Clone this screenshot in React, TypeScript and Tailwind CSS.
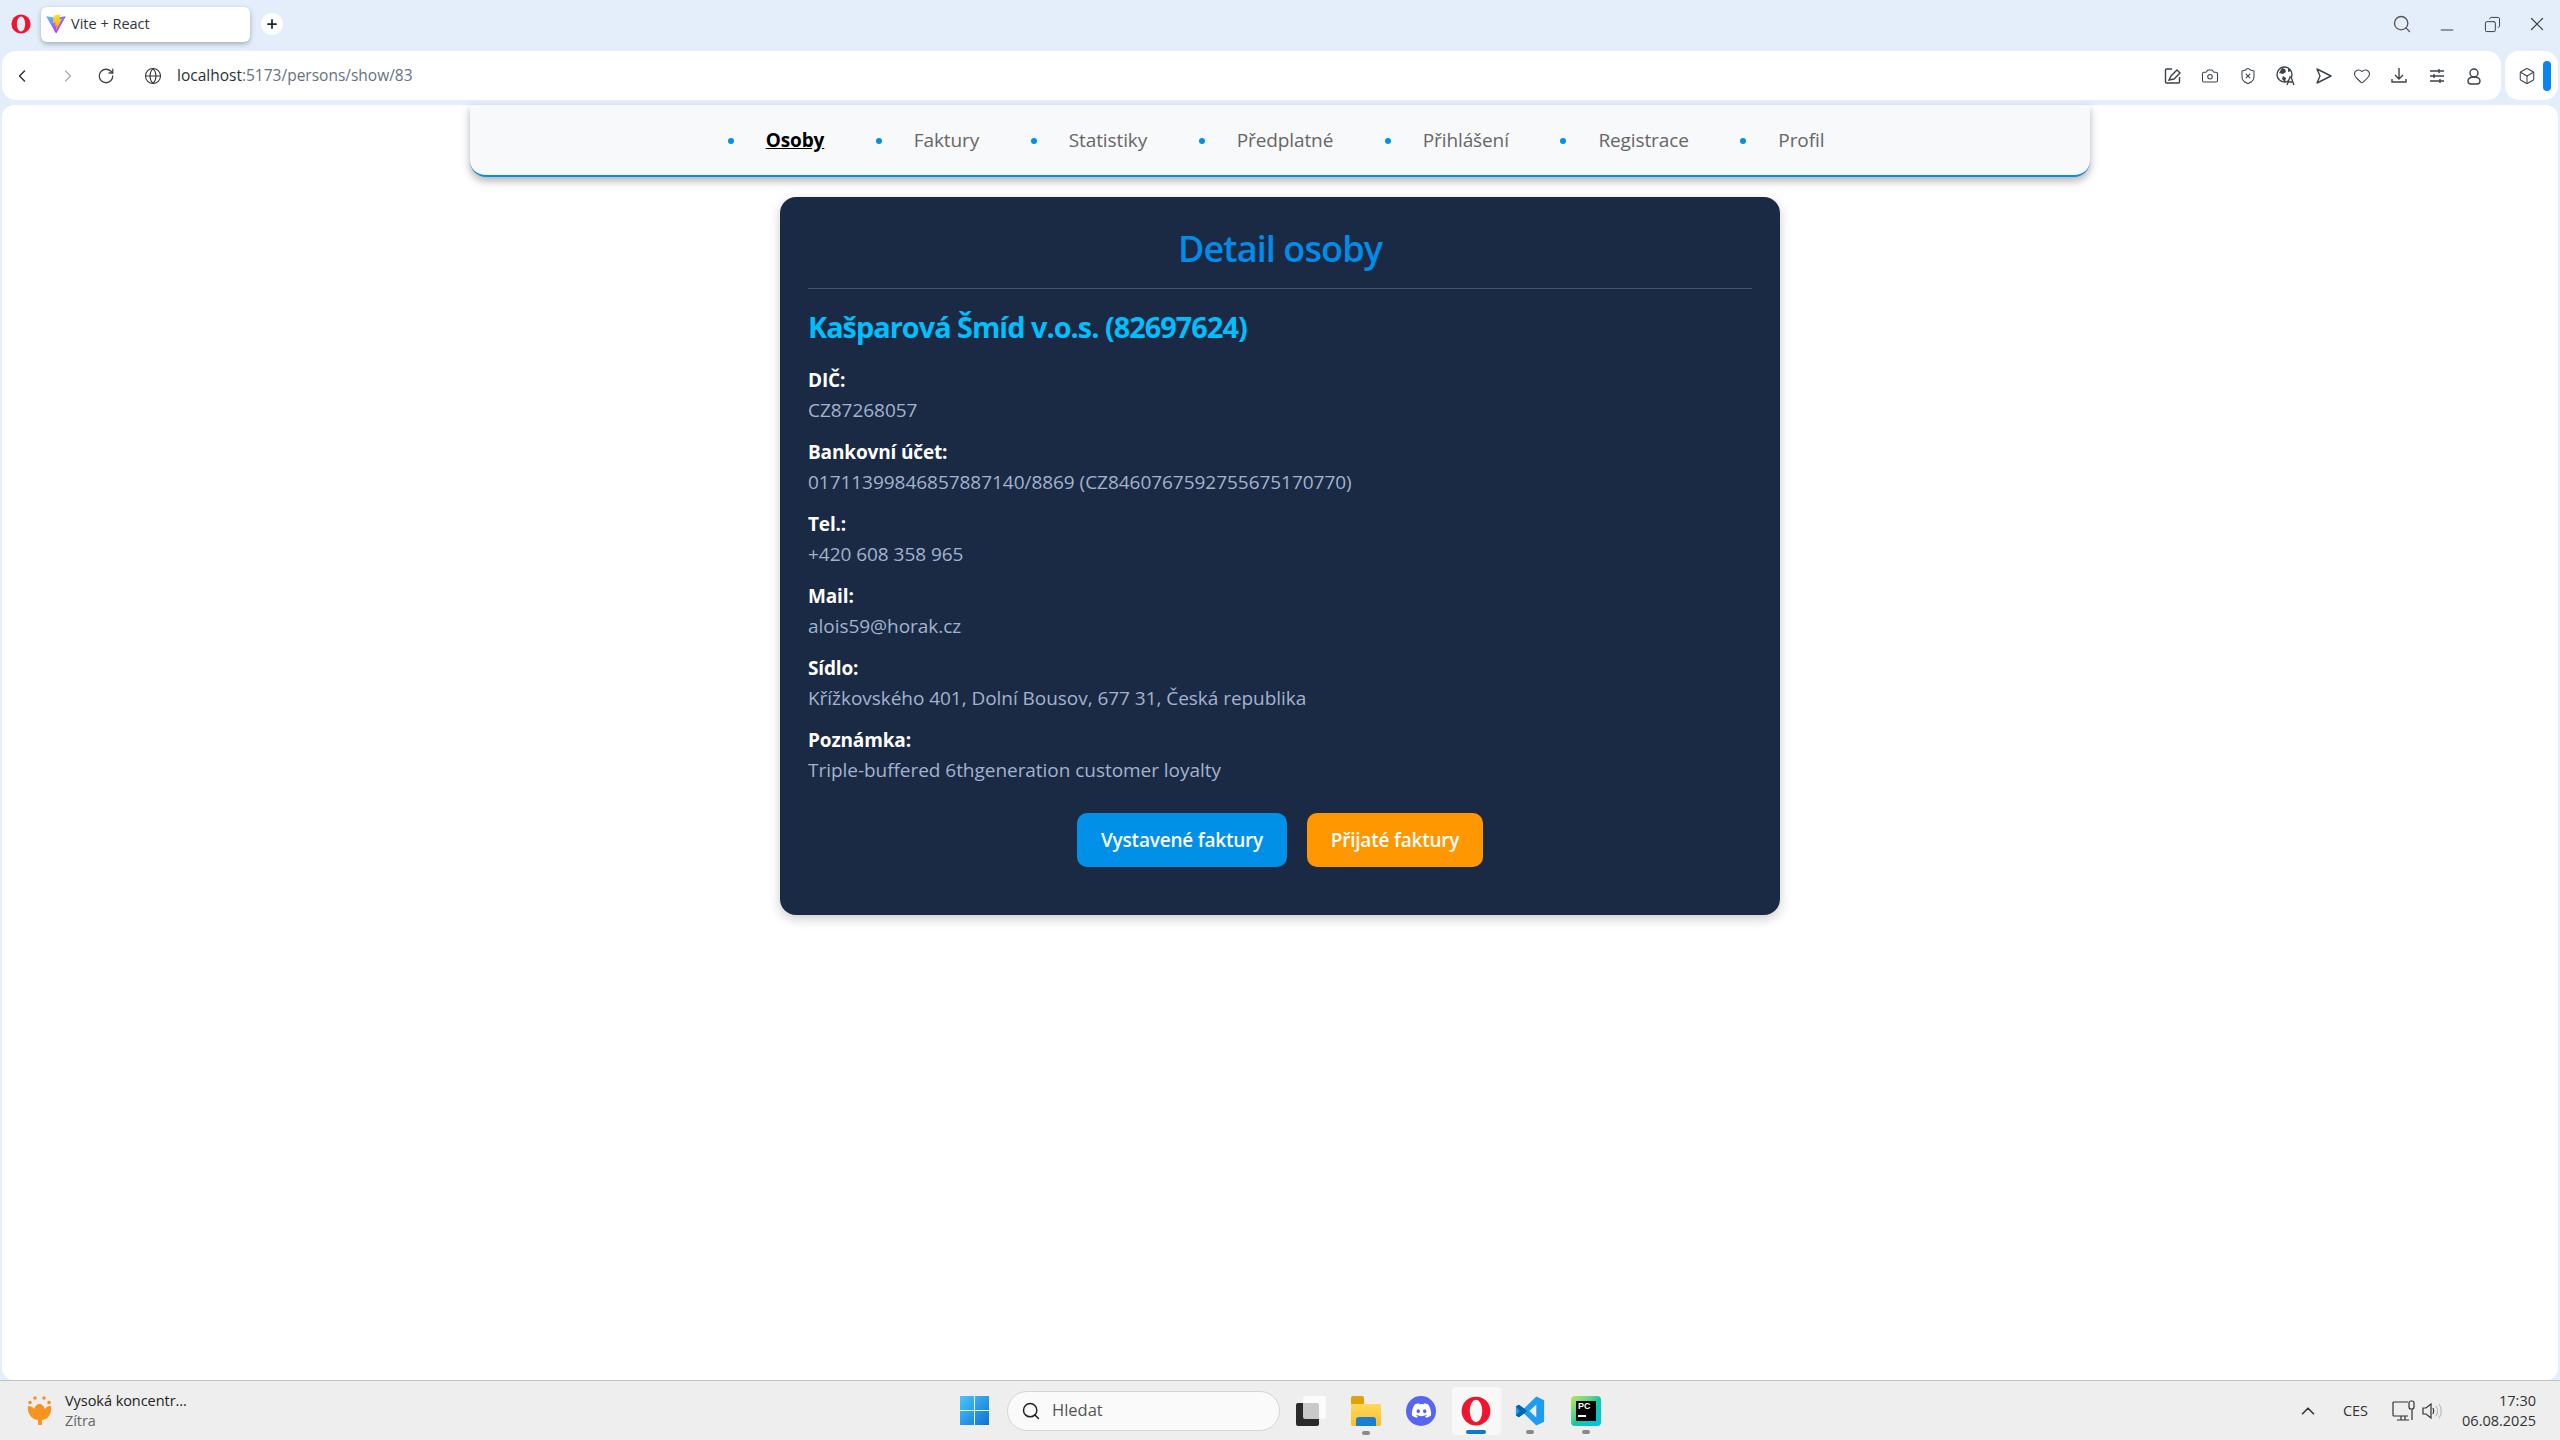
import { ChevronLeft, ChevronRight, ChevronUp, Globe, RotateCw, Search, X, Minus, Plus, Camera, ShieldX, Heart, Box, Copy } from 'lucide-react';
import { FaDiscord } from 'react-icons/fa';

const font = "font-['Open_Sans',_'Noto_Sans',sans-serif]";
const navItems = ['Osoby', 'Faktury', 'Statistiky', 'Předplatné', 'Přihlášení', 'Registrace', 'Profil'];
const details = [
  { label: 'DIČ:', value: 'CZ87268057' },
  { label: 'Bankovní účet:', value: '01711399846857887140/8869 (CZ8460767592755675170770)' },
  { label: 'Tel.:', value: '+420 608 358 965' },
  { label: 'Mail:', value: 'alois59@horak.cz' },
  { label: 'Sídlo:', value: 'Křížkovského 401, Dolní Bousov, 677 31, Česká republika' },
  { label: 'Poznámka:', value: 'Triple-buffered 6thgeneration customer loyalty' },
];

function OperaLogo({ size, hole }: { size: number; hole: string }) {
  return (
    <svg width={size} height={size} viewBox="0 0 24 24">
      <circle cx="12" cy="12" r="11.5" fill="#f0142f" />
      <ellipse cx="12" cy="12" rx="5" ry="9" fill={hole} />
    </svg>
  );
}

function ViteLogo() {
  return (
    <svg width="20" height="20" viewBox="0 0 410 404">
      <defs>
        <linearGradient id="viteA" x1="6" y1="33" x2="235" y2="344" gradientUnits="userSpaceOnUse">
          <stop stopColor="#41D1FF" />
          <stop offset="1" stopColor="#BD34FE" />
        </linearGradient>
        <linearGradient id="viteB" x1="194" y1="8" x2="236" y2="292" gradientUnits="userSpaceOnUse">
          <stop stopColor="#FFEA83" />
          <stop offset="0.08" stopColor="#FFDD35" />
          <stop offset="1" stopColor="#FFA800" />
        </linearGradient>
      </defs>
      <path fill="url(#viteA)" d="M399.641 59.5246L215.643 388.545C211.844 395.338 202.084 395.378 198.228 388.618L10.5817 59.5563C6.38087 52.1896 12.6802 43.2665 21.0281 44.7586L205.223 77.6824C206.398 77.8924 207.601 77.8904 208.776 77.6763L389.119 44.8058C397.439 43.2894 403.768 52.1434 399.641 59.5246Z" />
      <path fill="url(#viteB)" d="M292.965 1.5744L156.801 28.2552C154.563 28.6937 152.906 30.5903 152.771 32.8664L144.395 174.33C144.198 177.662 147.258 180.248 150.51 179.498L188.42 170.749C191.967 169.931 195.172 173.055 194.443 176.622L183.18 231.775C182.422 235.487 185.907 238.661 189.532 237.56L212.947 230.446C216.577 229.344 220.065 232.527 219.297 236.242L201.398 322.875C200.278 328.294 207.486 331.249 210.492 326.603L212.5 323.5L323.454 102.072C325.312 98.3645 322.108 94.137 318.036 94.9228L279.014 102.454C275.347 103.161 272.227 99.746 273.262 96.1583L298.731 7.86689C299.767 4.27314 296.636 0.855181 292.965 1.5744Z" />
    </svg>
  );
}

function TitleBar() {
  return (
    <div className="flex h-[51px] items-center pb-[3px] text-[#3a3f45]">
      <div className="ml-[11px] w-[30px]"><OperaLogo size={20} hole="#e4eefb" /></div>
      <div className="flex h-[35px] w-[209px] items-center gap-[5px] rounded-[6px] bg-white pl-[5px] text-[14.500px] text-[#30363c] shadow-[0_2px_5px_rgba(60,70,90,0.4)]">
        <ViteLogo />
        <span>Vite + React</span>
      </div>
      <div className="ml-[11px] flex h-[22px] w-[22px] items-center justify-center rounded-full bg-white">
        <Plus size={14} strokeWidth={3} className="text-[#20262c]" />
      </div>
      <div className="ml-auto flex items-center">
        <Search size={20} strokeWidth={1.6} className="mr-[25px] text-[#555]" />
        <Minus size={20} strokeWidth={1.2} className="mr-[27px] translate-y-[6px]" />
        <Copy size={17} strokeWidth={1.4} className="mr-[25px] scale-x-[-1]" />
        <X size={22} strokeWidth={1.3} className="mr-[12px]" />
      </div>
    </div>
  );
}

function EditIcon() {
  return (
    <svg width="18" height="18" viewBox="0 0 18 18" fill="none" stroke="#3c434a" strokeWidth="1.4">
      <path d="M8 2H2.5A1 1 0 0 0 1.500 3v12a1 1 0 0 0 1 1h12a1 1 0 0 0 1-1v-5" />
      <path d="M5 13l2-4 6-6 3 3-6 6-5 1z" />
    </svg>
  );
}

function TranslateIcon() {
  return (
    <svg width="20" height="20" viewBox="0 0 20 20">
      <circle cx="8.500" cy="8.500" r="7.500" fill="none" stroke="#3c434a" strokeWidth="1.4" />
      <path d="M6 2l3 1 1 3-3 2-4-1zM7 10l3 2-1 4-3-3zM12 2l3 3-3 1z" fill="#3c434a" />
      <path d="M11 19l3-8h1l3 8M12.500 16h4" fill="#fff" stroke="#3c434a" strokeWidth="1.3" />
    </svg>
  );
}

function AddressBar() {
  const iconCls = 'text-[#3c434a]';
  return (
    <div className="flex h-[49px] gap-[4px] px-[2px]">
      <div className="flex flex-1 items-center rounded-[14px] bg-white">
        <ChevronLeft size={20} strokeWidth={1.8} className="ml-[10px] text-[#333]" />
        <ChevronRight size={20} strokeWidth={1.4} className="ml-[26px] text-[#aaa]" />
        <RotateCw size={18} strokeWidth={1.7} className="ml-[19px] text-[#444]" />
        <Globe size={18} strokeWidth={1.4} className="ml-[29px] text-[#333]" />
        <div className={`ml-[15px] text-[15.500px] text-[#2b3035] ${font}`}>
          localhost<span className="text-[#66727f]">:5173/persons/show/83</span>
        </div>
        <div className="ml-auto mr-[18px] flex items-center gap-[19.400px]">
          <EditIcon />
          <Camera size={18} strokeWidth={1.4} className={iconCls} />
          <ShieldX size={18} strokeWidth={1.4} className={iconCls} />
          <TranslateIcon />
          <svg width="18" height="18" viewBox="0 0 18 18" fill="none" stroke="#3c434a" strokeWidth="1.4"><path d="M2 2l14 7-14 7 3-7z" strokeLinejoin="round" /></svg>
          <Heart size={18} strokeWidth={1.4} className={iconCls} />
          <svg width="18" height="18" viewBox="0 0 18 18" fill="none" stroke="#3c434a" strokeWidth="1.4"><path d="M9 1v10M5 8l4 4 4-4M2 12v3h14v-3" /></svg>
          <svg width="18" height="18" viewBox="0 0 18 18" fill="none" stroke="#3c434a" strokeWidth="1.4"><path d="M2 4h14M2 9h14M2 14h14" /><path d="M11 2v4M6 7v4M12 12v4" /></svg>
          <svg width="18" height="18" viewBox="0 0 18 18" fill="none" stroke="#3c434a" strokeWidth="1.4"><circle cx="9" cy="6" r="4" /><path d="M9 10c-4 0-6 1.500-6 4 0 2 1 3 3 3h6c2 0 3-1 3-3 0-2.500-2-4-6-4z" /></svg>
        </div>
      </div>
      <div className="flex w-[53px] items-center rounded-[14px] bg-white">
        <Box size={18} strokeWidth={1.4} className="ml-[13px] text-[#3c434a]" />
        <div className="ml-[7px] h-[30px] w-[8px] rounded-full bg-[#0a84f0]" />
      </div>
    </div>
  );
}

function Navbar() {
  return (
    <nav className="mx-auto h-[72px] w-[1620px] rounded-b-[16px] border-b-[2px] border-[#0090e8] bg-[#f8f9fa] shadow-[0_4px_8px_rgba(0,0,0,0.3)]">
      <ul className="flex h-full items-center justify-center gap-[51.500px] pt-[1px] pr-[8px]">
        {navItems.map((item, index) => (
          <li key={item} className="flex items-center gap-[32px]">
            <span className="h-[6px] w-[6px] rounded-full bg-[#0090e8]" />
            <span className={`text-[19px] tracking-[-0.1px] ${index === 0 ? 'font-bold text-black underline' : 'text-[#666]'}`}>
              {item}
            </span>
          </li>
        ))}
      </ul>
    </nav>
  );
}

function PersonCard() {
  return (
    <section className="mx-auto mt-[20px] h-[718px] w-[1000px] rounded-[16px] bg-[#1a2a44] px-[28px] pt-[27px] shadow-[0_4px_12px_rgba(0,0,0,0.2)]">
      <h1 className="border-b border-[#4a5568] pb-[15px] text-center text-[36px] leading-[49px] font-semibold tracking-[-0.9px] text-[#008ce8]">
        Detail osoby
      </h1>
      <h2 className="mt-[19px] mb-[19px] text-[28.800px] leading-[38px] font-bold tracking-[-0.95px] text-[#00bfff]">
        Kašparová Šmíd v.o.s. (82697624)
      </h2>
      {details.map((row) => (
        <div key={row.label} className="mb-[12px] text-[19px] leading-[30px] tracking-[-0.04px]">
          <div className="font-bold tracking-[-0.15px] text-white">{row.label}</div>
          <div className="text-[#a3b3cf]">{row.value}</div>
        </div>
      ))}
      <div className="mt-[28px] flex justify-center gap-[20px] text-[19px] font-semibold tracking-[-0.2px] text-white">
        <button className="h-[54px] w-[210px] rounded-[10px] bg-[#0090e8]">Vystavené faktury</button>
        <button className="h-[54px] w-[176px] rounded-[10px] bg-[#ff9800]">Přijaté faktury</button>
      </div>
    </section>
  );
}

function TaskbarApps() {
  return (
    <div className="absolute left-[960px] top-0 flex h-full items-center">
      <svg width="29" height="29" viewBox="0 0 29 29" className="ml-0">
        <defs>
          <linearGradient id="winA" x1="0" y1="0" x2="1" y2="1">
            <stop stopColor="#4cc5fa" />
            <stop offset="1" stopColor="#0a72d6" />
          </linearGradient>
        </defs>
        <path fill="url(#winA)" d="M0 0h14v14H0zM15 0h14v14H15zM0 15h14v14H0zM15 15h14v14H15z" />
      </svg>
      <div className="ml-[18px] flex h-[40px] w-[273px] items-center rounded-full border border-[#d5d5d5] bg-[#fafafa] pl-[13px] text-[16.500px] text-[#555]">
        <Search size={20} strokeWidth={1.8} className="text-[#222]" />
        <span className="ml-[11px]">Hledat</span>
      </div>
      <div className="relative ml-[16px] h-[30px] w-[30px]">
        <div className="absolute bottom-0 left-0 h-[23px] w-[23px] rounded-[2px] bg-[#2a2a2a]" />
        <div className="absolute right-0 top-0 h-[23px] w-[23px] rounded-[2px] bg-white/75" />
      </div>
      <div className="relative ml-[25px] h-[30px] w-[30px]">
        <div className="h-[8px] w-[13px] rounded-t-[2px] bg-[#e0a208]" />
        <div className="h-[22px] w-[30px] rounded-b-[2px] bg-gradient-to-b from-[#ffd95a] to-[#f9bf1e]" />
        <div className="absolute bottom-0 left-[5px] h-[9px] w-[20px] rounded-t-[3px] bg-[#1a7fd0]" />
        <div className="absolute -bottom-[9px] left-[11px] h-[4px] w-[8px] rounded-full bg-[#8a8a8a]" />
      </div>
      <div className="ml-[25px] flex h-[30px] w-[30px] items-center justify-center rounded-full bg-[#5865f2]">
        <FaDiscord size={21} className="text-white" />
      </div>
      <div className="relative ml-[25px] flex h-[30px] w-[30px] items-center justify-center">
        <div className="absolute -left-[9px] -top-[9px] h-[48px] w-[48px] rounded-[4px] bg-[#f8f8f8] shadow-[2px_0_0_#f4f4f4]" />
        <div className="relative"><OperaLogo size={30} hole="#f8f8f8" /></div>
        <div className="absolute -bottom-[8px] left-[5px] h-[4px] w-[20px] rounded-full bg-[#0a78d4]" />
      </div>
      <div className="relative ml-[24px] h-[30px] w-[30px]">
        <svg width="30" height="30" viewBox="0 0 100 100">
          <path fill="#1f9cf0" d="M71 2l26 12v72L71 98 30 58l-17 13-10-6V35l10-6 17 13zM71 28L48 50l23 22z" />
          <path fill="#0065a9" d="M3 35l10-6 17 13 10 8-10 8-17 13-10-6 13-15z" />
        </svg>
        <div className="absolute -bottom-[8px] left-[11px] h-[4px] w-[8px] rounded-full bg-[#8a8a8a]" />
      </div>
      <div className="relative ml-[26px] h-[30px] w-[30px] rounded-[4px] bg-gradient-to-br from-[#b7ea3a] via-[#19c8a0] to-[#08bdf0]">
        <div className="absolute left-[5px] top-[5px] flex h-[20px] w-[20px] flex-col bg-black pl-[2px] font-['Liberation_Sans',sans-serif] text-[9px] leading-[11px] font-bold text-white">
          PC
          <div className="mt-[3px] h-[2px] w-[8px] bg-white" />
        </div>
        <div className="absolute -bottom-[8px] left-[11px] h-[4px] w-[8px] rounded-full bg-[#8a8a8a]" />
      </div>
    </div>
  );
}

function Taskbar() {
  return (
    <footer className="relative flex h-[60px] items-center border-t border-[#c2c2c2] bg-[#eeeeee] text-[#222]">
      <svg width="26" height="32" viewBox="0 0 26 32" className="ml-[27px]">
        <g fill="#f7931e">
          <circle cx="8" cy="3" r="1.800" />
          <circle cx="17" cy="3" r="1.800" />
          <circle cx="3" cy="7.500" r="1.800" />
          <circle cx="22" cy="7.500" r="1.800" />
          <path d="M1 11c3 0 5 1 6 3 1-3 3-5 5.500-5S17 11 18 14c1-2 3-3 6-3 1 7-2 13-9 14v5h-4v-5C4 24 0 18 1 11z" />
        </g>
      </svg>
      <div className="ml-[12px] text-[14.500px] leading-[20px] tracking-[-0.05px]">
        <div>Vysoká koncentr...</div>
        <div className="text-[#666]">Zítra</div>
      </div>
      <TaskbarApps />
      <div className="ml-auto flex items-center">
        <ChevronUp size={22} strokeWidth={1.8} className="text-[#333]" />
        <span className="ml-[24px] text-[14.500px] text-[#333]">CES</span>
        <svg width="26" height="22" viewBox="0 0 26 22" fill="none" stroke="#333" strokeWidth="1.2" className="ml-[24px]">
          <path d="M16 2H2a1 1 0 0 0-1 1v12a1 1 0 0 0 1 1h14M5 20h12M9 16v4M13 16v4M20 9v11" />
          <rect x="17" y="1" width="5" height="8" rx="2" />
        </svg>
        <svg width="22" height="18" viewBox="0 0 22 18" fill="none" strokeWidth="1.2" className="ml-[4px]">
          <path stroke="#333" d="M1 6h3l5-4v14l-5-4H1zM11 6c1 2 1 4 0 6" />
          <path stroke="#bbb" d="M14 4c2 3 2 7 0 10M17 2c3 4 3 10 0 14" />
        </svg>
        <div className="ml-[18px] mr-[24px] text-right text-[14.500px] leading-[20px] text-[#333]">
          <div>17:30</div>
          <div>06.08.2025</div>
        </div>
      </div>
    </footer>
  );
}

export default function App() {
  return (
    <div className={`flex h-screen flex-col overflow-hidden bg-[#e4eefb] ${font}`}>
      <TitleBar />
      <AddressBar />
      <main className="mx-[2px] mt-[5px] flex-1 rounded-[12px] bg-white">
        <Navbar />
        <PersonCard />
      </main>
      <Taskbar />
    </div>
  );
}
